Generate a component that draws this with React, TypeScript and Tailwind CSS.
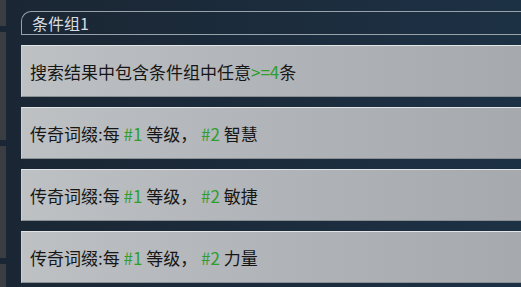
import React from "react";

type Part = { text: string; green?: boolean };

const rows: Part[][] = [
	[{ text: "搜索结果中包含条件组中任意" }, { text: ">=4", green: true }, { text: "条" }],
	[
		{ text: "传奇词缀:每 " },
		{ text: "#1", green: true },
		{ text: " 等级， " },
		{ text: "#2", green: true },
		{ text: " 智慧" },
	],
	[
		{ text: "传奇词缀:每 " },
		{ text: "#1", green: true },
		{ text: " 等级， " },
		{ text: "#2", green: true },
		{ text: " 敏捷" },
	],
	[
		{ text: "传奇词缀:每 " },
		{ text: "#1", green: true },
		{ text: " 等级， " },
		{ text: "#2", green: true },
		{ text: " 力量" },
	],
];

function ConditionRow({ parts }: { parts: Part[] }) {
	return (
		<div className="flex h-[52px] w-[520px] items-center border-t border-l border-b border-t-[#e2e4e6] border-l-[#cdd0d3] border-b-[#8a8f94] bg-gradient-to-r from-[#bec1c4] via-[#b0b3b7] to-[#a5a9ae] pl-[8px]">
			<span className="whitespace-pre text-[17px] leading-none text-[#161616]">
				{parts.map((p, i) => (
					<span key={i} className={p.green ? "text-[#2f9e2f]" : undefined}>
						{p.text}
					</span>
				))}
			</span>
		</div>
	);
}

export default function App() {
	return (
		<div
			className="flex h-[287px] w-[521px] overflow-hidden bg-gradient-to-r from-[#1a2633] to-[#1d3145]"
			style={{ fontFamily: '"Noto Sans CJK SC", "Noto Sans", sans-serif' }}
		>
			{/* left edge panels */}
			<div className="flex w-[7px] shrink-0 flex-col gap-[6px] pr-[1px]">
				<div className="h-[26px] bg-[#3a3e42]" />
				<div className="h-[108px] bg-[#3a3e42]" />
				<div className="h-[112px] bg-[#3a3e42]" />
				<div className="flex-1 bg-[#3a3e42]" />
			</div>

			<div className="flex flex-col pl-[14px] pt-[11px]">
				{/* group header */}
				<div className="flex h-[24px] w-[520px] items-center rounded-tl-[10px] border-t border-l border-b border-[#97a2ab] pl-[10px]">
					<span className="text-[16px] leading-none text-[#d9dde0]">条件组1</span>
				</div>

				<div className="mt-[10px] flex flex-col gap-[10px]">
					{rows.map((r, i) => (
						<ConditionRow key={i} parts={r} />
					))}
				</div>
			</div>
		</div>
	);
}
